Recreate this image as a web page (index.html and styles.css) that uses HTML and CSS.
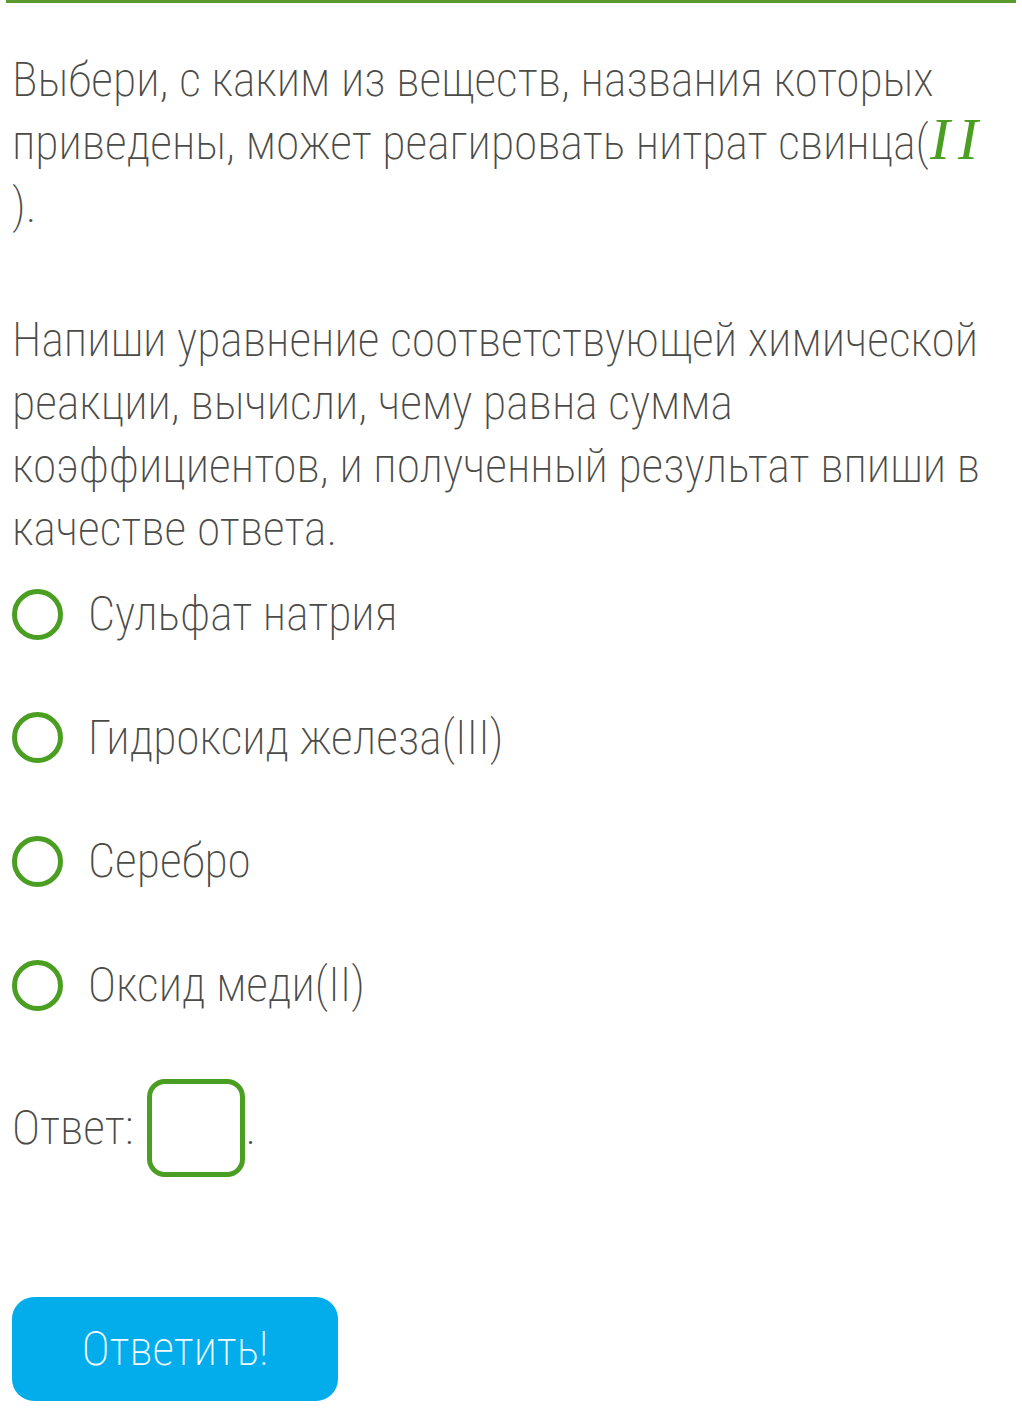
FILE: index.html
```html
<!DOCTYPE html>
<html lang="ru">
<head>
<meta charset="utf-8">
<link rel="stylesheet" href="styles.css">
</head>
<body>
<div class="topline"></div>
<main class="task">
  <p class="question">Выбери, с каким из веществ, названия которых<br>приведены, может реагировать нитрат свинца(<span class="math">II</span><br>).</p>
  <p class="question second">Напиши уравнение соответствующей химической<br>реакции, вычисли, чему равна сумма<br>коэффициентов, и полученный результат впиши в<br>качестве ответа.</p>
  <ul class="options">
    <li class="option"><span class="radio"></span><span>Сульфат натрия</span></li>
    <li class="option"><span class="radio"></span><span>Гидроксид железа(III)</span></li>
    <li class="option"><span class="radio"></span><span>Серебро</span></li>
    <li class="option"><span class="radio"></span><span>Оксид меди(II)</span></li>
  </ul>
  <div class="answer"><span>Ответ:</span><span class="box"></span><span class="dot">.</span></div>
  <button class="submit">Ответить!</button>
</main>
</body>
</html>
```
FILE: styles.css
```css
html, body {
  margin: 0;
  padding: 0;
  background: #ffffff;
}
body {
  font-family: Roboto, "Noto Sans", sans-serif;
  font-weight: 200;
  font-stretch: 87.5%;
  font-size: 47.8px;
  color: #4b4b47;
}
.topline {
  height: 3px;
  margin: 0 6px;
  background: #5a9b2f;
}
.task {
  padding: 0 12px;
}
.question {
  margin: 0;
  line-height: 63px;
  padding-top: 46px;
}
.question.second {
  padding-top: 71px;
}
.math {
  font-family: "Liberation Serif", "DejaVu Serif", serif;
  font-style: italic;
  font-weight: 400;
  font-stretch: normal;
  color: #4a9e22;
  font-size: 60px;
  line-height: 0;
  letter-spacing: 8px;
  margin-left: 1px;
}
.options {
  list-style: none;
  margin: 21px 0 0;
  padding: 0;
  display: flex;
  flex-direction: column;
  gap: 59.7px;
}
.option {
  display: flex;
  align-items: center;
  gap: 25px;
  height: 64px;
}
.radio {
  width: 41px;
  height: 41px;
  border: 5px solid #4a9e22;
  border-radius: 50%;
  flex: none;
}
.answer {
  display: flex;
  align-items: center;
  margin-top: 62px;
  height: 98px;
}
.box {
  box-sizing: border-box;
  width: 98px;
  height: 98px;
  border: 5px solid #4a9e22;
  border-radius: 18px;
  margin-left: 13px;
}
.dot {
  margin-left: 1px;
}
.submit {
  display: block;
  margin-top: 120px;
  width: 326px;
  height: 104px;
  border: none;
  border-radius: 22px;
  background: #03adec;
  color: #f4fbff;
  font-family: Roboto, "Noto Sans", sans-serif;
  font-weight: 200;
  font-stretch: 87.5%;
  font-size: 47.5px;
  padding: 0;
}
```
